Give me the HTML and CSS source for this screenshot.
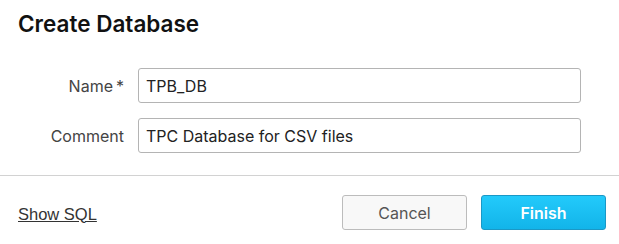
FILE: index.html
```html
<!DOCTYPE html>
<html>
<head>
    <title>Create Database</title>
    <link rel="stylesheet" href="styles.css">
</head>
<body>
    <div class="dialog">
        <div class="header">
            <h1>Create Database</h1>
        </div>

        <form class="form">
            <label class="label" for="db_name">Name<span class="req">*</span></label>
            <input class="input" id="db_name" type="text" value="TPB_DB">

            <label class="label" for="db_comment">Comment</label>
            <input class="input" id="db_comment" type="text" value="TPC Database for CSV files">
        </form>

        <div class="footer">
            <a class="link" href="#">Show SQL</a>
            <div class="actions">
                <button class="button button-cancel">Cancel</button>
                <button class="button button-finish">Finish</button>
            </div>
        </div>
    </div>
</body>
</html>
```

FILE: styles.css
```css
body {
    margin: 0;
    padding: 0;
    background-color: #fff;
    font-family: Inter, 'Noto Sans', Arial, sans-serif;
    color: #222;
}

.dialog {
    width: 619px;
    height: 244px;
    overflow: hidden;
}

.header {
    padding: 10px 18px 0;
}

.header h1 {
    margin: 0;
    font-size: 22.5px;
    line-height: 28px;
    font-weight: 600;
    color: #111;
}

.form {
    display: grid;
    grid-template-columns: 106px 1fr;
    column-gap: 14px;
    row-gap: 15px;
    align-items: center;
    padding: 30px 38px 22px 18px;
}

.label {
    text-align: right;
    font-size: 16px;
    color: #444;
}

.req {
    margin-left: 3px;
}

.input {
    box-sizing: border-box;
    height: 35px;
    padding: 0 7px;
    border: 1px solid #b4b4b4;
    border-radius: 3px;
    font-family: inherit;
    font-size: 16px;
    color: #222;
    outline: none;
}

.footer {
    display: flex;
    align-items: center;
    justify-content: space-between;
    border-top: 1px solid #d2d2d2;
    padding: 19px 13px 0 18px;
}

.link {
    margin-top: 3px;
    font-family: 'Liberation Sans', Arial, sans-serif;
    font-size: 16.5px;
    color: #333;
    text-decoration: underline;
}

.actions {
    display: flex;
    gap: 14px;
}

.button {
    box-sizing: border-box;
    width: 125px;
    height: 35px;
    border-radius: 3px;
    font-family: inherit;
    font-size: 16px;
    cursor: pointer;
}

.button-cancel {
    background-color: #f8f8f8;
    border: 1px solid #bcbcbc;
    color: #555;
}

.button-finish {
    background: linear-gradient(#23cafb, #12b4e9);
    border: 1px solid #1a98c6;
    color: #fff;
    font-weight: 600;
}
```
